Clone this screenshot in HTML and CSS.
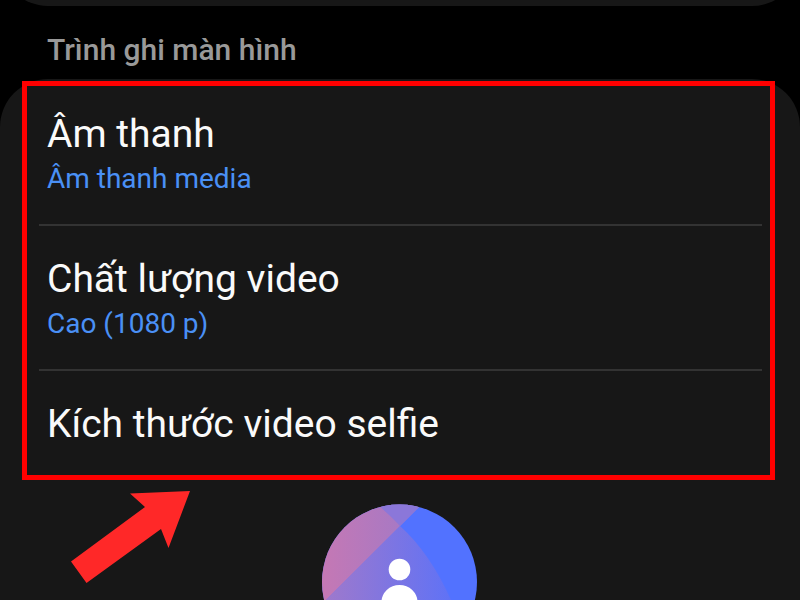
FILE: index.html
```html
<!DOCTYPE html>
<html lang="vi">
<head>
    <meta charset="UTF-8">
    <meta name="viewport" content="width=device-width, initial-scale=1.0">
    <title>Trình ghi màn hình</title>
    <link rel="stylesheet" href="styles.css">
</head>
<body>

<main class="screen">
    <div class="previous-card"></div>

    <h2 class="section-title">Trình ghi màn hình</h2>

    <section class="card">
        <div class="settings-list">
            <button class="setting" type="button">
                <span class="setting-name">Âm thanh</span>
                <span class="setting-value">Âm thanh media</span>
            </button>
            <button class="setting" type="button">
                <span class="setting-name">Chất lượng video</span>
                <span class="setting-value">Cao (1080 p)</span>
            </button>
            <button class="setting" type="button">
                <span class="setting-name">Kích thước video selfie</span>
            </button>
        </div>

        <svg class="selfie-preview" viewBox="-1 0 156 156" aria-hidden="true">
            <defs>
                <linearGradient id="pink" x1="0" x2="100" y1="0" y2="0" gradientUnits="userSpaceOnUse">
                    <stop offset="0" stop-color="#c578b4"/>
                    <stop offset="1" stop-color="#a079c8"/>
                </linearGradient>
                <linearGradient id="violet" x1="0" x2="130" y1="0" y2="0" gradientUnits="userSpaceOnUse">
                    <stop offset="0" stop-color="#a079cb"/>
                    <stop offset="1" stop-color="#5f72f6"/>
                </linearGradient>
                <clipPath id="round">
                    <circle cx="77.5" cy="78" r="77.5"/>
                </clipPath>
            </defs>
            <g clip-path="url(#round)">
                <rect width="156" height="156" fill="#5272ff"/>
                <path d="M-20 120 L78 22 Q108 49 129 96 Q140 122 144 156 H-20Z" fill="url(#violet)"/>
                <path d="M-20 -4 H104 L-20 120Z" fill="url(#pink)"/>
                <path d="M50 -4 Q66 9 78 22 L104 -4Z" fill="#8b77d9"/>
            </g>
            <circle cx="77.5" cy="65.5" r="10.8" fill="#fff"/>
            <path d="M59.5 102 V98 A18 17 0 0 1 95.5 98 V102Z" fill="#fff"/>
        </svg>

        <svg class="arrow" viewBox="0 0 120 93" aria-hidden="true">
            <path d="M120 0 L98.500 57 L91 38 L16.500 92 L1 70.500 L75 16 L60 2.500Z" fill="#ff2828"/>
        </svg>
    </section>
</main>

</body>
</html>
```
FILE: styles.css
```css
body {
    margin: 0;
    background-color: #000;
    color: #fafafa;
    font-family: Roboto, "Noto Sans", sans-serif;
}

.screen {
    display: flex;
    flex-direction: column;
    height: 100vh;
    overflow: hidden;
}

/* Bottom edge of the card above */
.previous-card {
    flex: none;
    height: 48px;
    margin-top: -42px;
    background-color: #171717;
    border-radius: 0 0 48px 48px;
}

.section-title {
    margin: 0;
    padding: 27px 47px 12px;
    color: #999;
    font-size: 30px;
    font-weight: 500;
    line-height: 34px;
}

.card {
    position: relative;
    flex: 1 0 auto;
    padding: 2px 25px 0 22px;
    background-color: #171717;
    border-radius: 48px 48px 0 0;
}

/* Red highlight is drawn inside the list edges */
.settings-list {
    display: flex;
    flex-direction: column;
    padding: 0 13px 0 17px;
    outline: 5px solid #f00;
    outline-offset: -5px;
}

.setting {
    display: flex;
    flex-direction: column;
    padding: 29px 8px 24px;
    background: none;
    border: none;
    border-bottom: 2px solid #333;
    color: inherit;
    font-family: inherit;
    text-align: left;
    cursor: pointer;
}

.setting:last-child {
    padding-bottom: 32px;
    border-bottom: none;
}

.setting-name {
    font-size: 39px;
    line-height: 48px;
}

.setting-value {
    color: #4a90f5;
    font-size: 28px;
    line-height: 42px;
}

.selfie-preview {
    display: block;
    width: 156px;
    height: 156px;
    margin: 24px auto 0;
}

.arrow {
    position: absolute;
    top: 412px;
    left: 70px;
    width: 120px;
    height: 93px;
}
```
